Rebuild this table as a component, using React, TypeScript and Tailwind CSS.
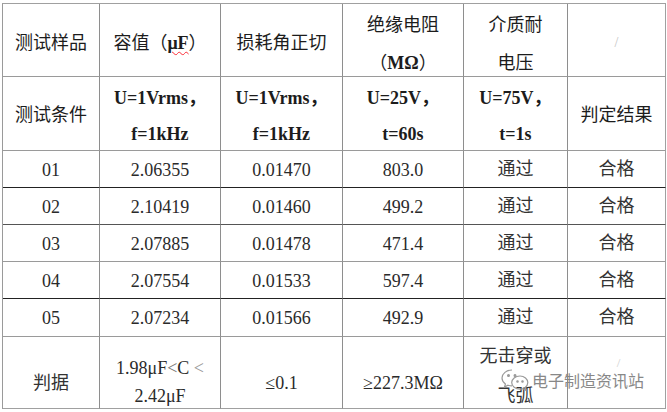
import React from "react";
import clsx from "clsx";

const Cell = ({
  children,
  line,
  className,
}: {
  children?: React.ReactNode;
  line: string;
  className?: string;
}) => (
  <div
    className={clsx(
      "flex flex-col items-center justify-center border-r border-b border-r-[#8e8e8e] text-center",
      line,
      className
    )}
  >
    {children}
  </div>
);

const rows = [
  { id: "01", c: "2.06355", d: "0.01470", r: "803.0", line: "border-b-[#222]" },
  { id: "02", c: "2.10419", d: "0.01460", r: "499.2", line: "border-b-[#555]" },
  { id: "03", c: "2.07885", d: "0.01478", r: "471.4", line: "border-b-[#9a9a9a]" },
  { id: "04", c: "2.07554", d: "0.01533", r: "597.4", line: "border-b-[#222]" },
  { id: "05", c: "2.07234", d: "0.01566", r: "492.9", line: "border-b-[#9a9a9a]" },
];

const WeChatMark = () => (
  <svg width="30" height="26" viewBox="0 0 30 26" fill="none" stroke="#9a9a9a" strokeWidth="1.2">
    <path d="M12 3c-5.5 0-10 3.6-10 8 0 2.4 1.3 4.5 3.4 6l-0.9 3 3.5-1.8c1.2 0.4 2.6 0.6 4 0.6" />
    <path d="M20 9c-4.6 0-8.3 3-8.3 6.6s3.7 6.6 8.3 6.6c1 0 2-0.2 2.9-0.5l2.8 1.5-0.7-2.5c1.7-1.2 2.8-3 2.8-5.1C27.8 12 24.3 9 20 9z" />
    <circle cx="8.5" cy="8.5" r="0.9" fill="#9a9a9a" />
    <circle cx="15" cy="8.5" r="0.9" fill="#9a9a9a" />
    <circle cx="17.5" cy="14.5" r="0.7" fill="#9a9a9a" />
    <circle cx="22.5" cy="14.5" r="0.7" fill="#9a9a9a" />
  </svg>
);

const App = () => {
  return (
    <div className="w-[667px] h-[412px] bg-white pt-[3px] pl-[2px] font-['Liberation_Serif','Noto_Sans_CJK_SC',serif] text-[18px] text-[#1c1c1c]">
      <div className="relative grid w-[664px] grid-cols-[97px_121px_122px_121px_104px_98px] grid-rows-[73px_74px_37px_37px_37px_37px_38px_72px] border-l border-t border-l-[#9a9a9a] border-t-[#a0a0a0]">
        {/* header */}
        <Cell line="border-b-[#9a9a9a]" className="pt-[6px]">测试样品</Cell>
        <Cell line="border-b-[#9a9a9a]" className="pt-[6px]">
          <span>
            容值（<b className="underline decoration-wavy decoration-red-500 decoration-1 underline-offset-2">μF</b>）
          </span>
        </Cell>
        <Cell line="border-b-[#9a9a9a]" className="pt-[6px]">损耗角正切</Cell>
        <Cell line="border-b-[#9a9a9a]" className="pt-[8px] leading-[38px]">
          <span>绝缘电阻</span>
          <span>
            （<b>MΩ</b>）
          </span>
        </Cell>
        <Cell line="border-b-[#9a9a9a]" className="pt-[8px] leading-[38px]">
          <span>介质耐</span>
          <span>电压</span>
        </Cell>
        <Cell line="border-b-[#9a9a9a]" className="border-r-[#a0a0a0] pt-[4px] text-[14px] text-[#c4c4c4]">
          /
        </Cell>

        {/* conditions */}
        <Cell line="border-b-[#9a9a9a]" className="pt-[4px]">测试条件</Cell>
        <Cell line="border-b-[#9a9a9a]" className="pt-[4px] font-bold leading-[36px]">
          <span>U=1Vrms，</span>
          <span>f=1kHz</span>
        </Cell>
        <Cell line="border-b-[#9a9a9a]" className="pt-[4px] font-bold leading-[36px]">
          <span>U=1Vrms，</span>
          <span>f=1kHz</span>
        </Cell>
        <Cell line="border-b-[#9a9a9a]" className="pt-[4px] font-bold leading-[36px]">
          <span>U=25V，</span>
          <span>t=60s</span>
        </Cell>
        <Cell line="border-b-[#9a9a9a]" className="pt-[4px] font-bold leading-[36px]">
          <span>U=75V，</span>
          <span>t=1s</span>
        </Cell>
        <Cell line="border-b-[#9a9a9a]" className="border-r-[#a0a0a0] pt-[4px]">判定结果</Cell>

        {rows.map((row) => (
          <React.Fragment key={row.id}>
            <Cell line={row.line} className="pt-[2px] text-[#2a2a2a]">{row.id}</Cell>
            <Cell line={row.line} className="pt-[2px] text-[#2a2a2a]">{row.c}</Cell>
            <Cell line={row.line} className="pt-[2px] text-[#2a2a2a]">{row.d}</Cell>
            <Cell line={row.line} className="pt-[2px] text-[#2a2a2a]">{row.r}</Cell>
            <Cell line={row.line} className="text-[#333]">通过</Cell>
            <Cell line={row.line} className="border-r-[#a0a0a0] text-[#333]">合格</Cell>
          </React.Fragment>
        ))}

        {/* criteria */}
        <Cell line="border-b-[#a0a0a0]" className="pt-[22px] text-[#333]">判据</Cell>
        <Cell line="border-b-[#a0a0a0]" className="pt-[18px] leading-[28px] text-[#2a2a2a]">
          <span>
            1.98μF<span className="text-[#777]">&lt;</span>C <span className="text-[#999]">&lt;</span>
          </span>
          <span>2.42μF</span>
        </Cell>
        <Cell line="border-b-[#a0a0a0]" className="pt-[22px] text-[#2a2a2a]">≤0.1</Cell>
        <Cell line="border-b-[#a0a0a0]" className="pt-[22px] text-[#2a2a2a]">≥227.3MΩ</Cell>
        <Cell line="border-b-[#a0a0a0]" className="pt-[6px] leading-[40px] text-[#333]">
          <span>无击穿或</span>
          <span>飞弧</span>
        </Cell>
        <Cell line="border-b-[#a0a0a0]" className="border-r-[#a0a0a0] pb-[20px] pl-[4px] text-[13px] text-[#d0d0d0]">
          /
        </Cell>

        {/* watermark */}
        <div className="absolute left-[497px] top-[363px] flex items-center gap-[2px] text-[16px] text-[#888] font-['Noto_Sans_CJK_SC',sans-serif]">
          <WeChatMark />
          <span>电子制造资讯站</span>
        </div>
      </div>
    </div>
  );
};

export default App;
